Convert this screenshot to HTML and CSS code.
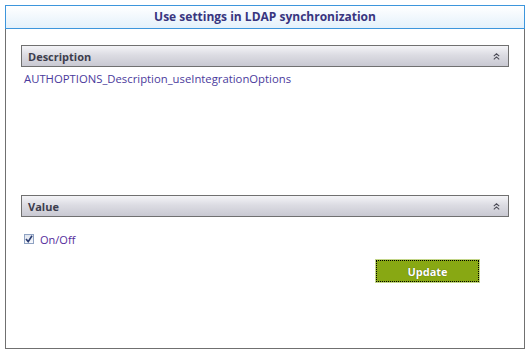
FILE: index.html
```html
<!DOCTYPE html>
<html>
<head>
<meta charset="utf-8">
<link rel="stylesheet" href="styles.css">
</head>
<body>
<div class="panel">
  <div class="panel-title">Use settings in LDAP synchronization</div>
  <div class="panel-body">
    <div class="section">
      <div class="section-head">
        <span class="section-label">Description</span>
        <svg class="chev" width="7" height="7" viewBox="0 0 7 7"><path d="M0.8 3.2 L3.5 0.8 L6.2 3.2 M0.8 6.3 L3.5 3.9 L6.2 6.3" fill="none" stroke="#4a4a55" stroke-width="1.1"/></svg>
      </div>
      <div class="desc-text">AUTHOPTIONS_Description_useIntegrationOptions</div>
    </div>
    <div class="section">
      <div class="section-head">
        <span class="section-label">Value</span>
        <svg class="chev" width="7" height="7" viewBox="0 0 7 7"><path d="M0.8 3.2 L3.5 0.8 L6.2 3.2 M0.8 6.3 L3.5 3.9 L6.2 6.3" fill="none" stroke="#4a4a55" stroke-width="1.1"/></svg>
      </div>
      <label class="check-row">
        <span class="checkbox"><svg width="8" height="8" viewBox="0 0 8 8"><path d="M1 4 L3.2 6.6 L7 0.8" fill="none" stroke="#2b3d72" stroke-width="1.6"/></svg></span>
        <span class="check-label">On/Off</span>
      </label>
      <div class="actions">
        <button class="btn-update">Update</button>
      </div>
    </div>
  </div>
</div>
</body>
</html>
```
FILE: styles.css
```css
html, body {
  margin: 0;
  padding: 0;
  background: #ffffff;
}
body {
  font-family: "Open Sans", "Noto Sans", sans-serif;
  padding: 5px 5px 4px 5px;
}
.panel {
  width: 520px;
  box-sizing: border-box;
}
.panel-title {
  height: 24px;
  box-sizing: border-box;
  border: 1px solid #3d96dc;
  background: linear-gradient(#ffffff, #e4f1fb);
  text-align: center;
  font-weight: 700;
  font-size: 12px;
  line-height: 22px;
  color: #38357f;
}
.panel-body {
  height: 320px;
  box-sizing: border-box;
  border: 1px solid #707070;
  border-top: none;
  padding: 16px 15px 0 15px;
}
.section-head {
  height: 22px;
  box-sizing: border-box;
  border: 1px solid #707070;
  background: linear-gradient(#f4f4f7 0%, #dcdce3 45%, #c9c9d2 100%);
  display: flex;
  align-items: center;
  justify-content: space-between;
  padding: 0 8px 0 6px;
}
.section-label {
  font-weight: 700;
  font-size: 11px;
  color: #3d3d4d;
}
.chev {
  display: block;
}
.desc-text {
  margin: 4px 0 0 3px;
  font-size: 11.3px;
  color: #4a3a9c;
  height: 124px;
}
.check-row {
  display: flex;
  align-items: center;
  margin: 16px 0 0 3px;
  height: 12px;
}
.checkbox {
  width: 8px;
  height: 8px;
  border: 1px solid #8fa2c2;
  background: linear-gradient(#dfe5ef, #f8f9fc);
  display: flex;
  align-items: center;
  justify-content: center;
}
.check-label {
  margin-left: 6px;
  font-size: 11px;
  color: #542c9c;
}
.actions {
  display: flex;
  justify-content: flex-end;
  padding-right: 30px;
  margin-top: 15px;
}
.btn-update {
  width: 103px;
  height: 22px;
  box-sizing: border-box;
  background: #88a813;
  border: 1px dotted #000;
  outline: 1px solid #c4d68a;
  color: #ffffff;
  font-family: "Open Sans", sans-serif;
  font-weight: 700;
  font-size: 11px;
  padding: 0;
  text-shadow: 0 0 1px #40500a;
}
```
